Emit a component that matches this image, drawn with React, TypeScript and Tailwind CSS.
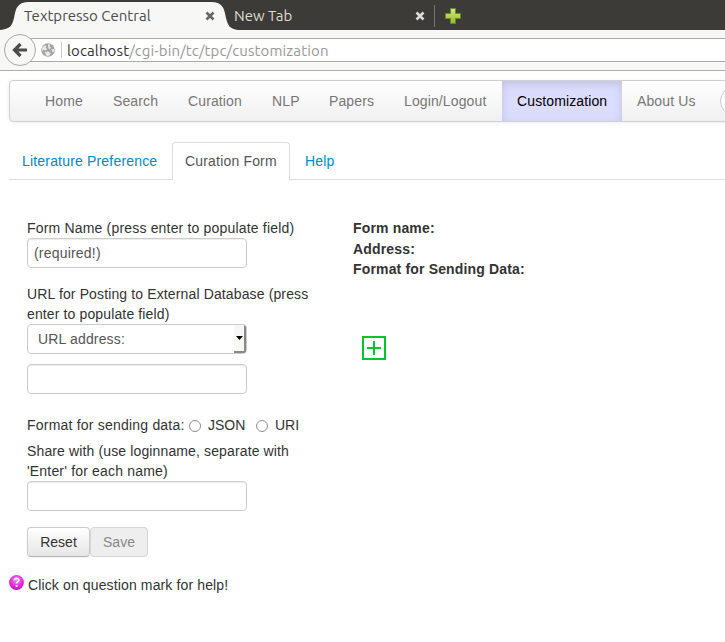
import React from "react";

const navItems = [
  { label: "Home", cls: "w-[68px]" },
  { label: "Search", cls: "w-[75px]" },
  { label: "Curation", cls: "w-[84px]" },
  { label: "NLP", cls: "w-[57px]" },
  { label: "Papers", cls: "w-[75px]" },
  { label: "Login/Logout", cls: "w-[113px]" },
  { label: "Customization", cls: "w-[120px]", active: true },
  { label: "About Us", cls: "w-[98px]" },
];

const field =
  "block h-[30px] w-[220px] rounded-[4px] border border-[#ccc] bg-white px-[6px] text-[14px] tracking-[0.2px] text-[#555] shadow-[inset_0_1px_1px_rgba(0,0,0,0.075)] outline-none";

function CloseMark({ color }: { color: string }) {
  return (
    <svg width="10" height="10" viewBox="0 0 10 10" className="-mr-px shrink-0">
      <path d="M1.5 1.5L8.5 8.5M8.5 1.5L1.5 8.5" stroke={color} strokeWidth="2.5" />
    </svg>
  );
}

function TabStrip() {
  return (
    <div className="relative flex h-[30px] bg-[#3c3b37] font-['Ubuntu','Noto_Sans','Open_Sans',sans-serif] text-[15px]">
      <svg width="240" height="30" className="absolute left-0 top-0">
        <path d="M0 30C10 29 12 26 14 18C16 7 18 2 29 2H211C222 2 224 7 226 18C228 26 230 29 238 30Z" fill="#f7f7f5" />
      </svg>
      <div className="relative flex h-[30px] w-[214px] items-center justify-between pl-6 pt-[2px] text-[#4c4c4c]">
        <span className="whitespace-nowrap">Textpresso Central</span>
        <CloseMark color="#666" />
      </div>
      <div className="relative flex h-[30px] w-[210px] items-center justify-between pl-5 pt-[2px] text-[#dfdbd2]">
        <span className="whitespace-nowrap">New Tab</span>
        <CloseMark color="#ddd" />
      </div>
      <div className="ml-[10px] mt-[5px] h-[22px] w-px bg-[#77756f]" />
      <svg width="18" height="18" viewBox="0 0 18 18" className="ml-[9px] mt-[7px]">
        <defs>
          <linearGradient id="plus" x1="0" y1="0" x2="0" y2="1">
            <stop offset="0" stopColor="#d7ea78" />
            <stop offset="1" stopColor="#98b92a" />
          </linearGradient>
        </defs>
        <path d="M6.5 1.5H11.5V6.5H16.5V11.5H11.5V16.5H6.5V11.5H1.5V6.5H6.5Z" fill="url(#plus)" stroke="#608c2b" />
      </svg>
    </div>
  );
}

function AddressBar() {
  return (
    <div className="flex h-[41px] border-b border-[#b3afaa] bg-[#f7f7f5] pl-1 pt-1">
      <div className="z-10 flex h-8 w-8 shrink-0 items-center justify-center rounded-full border border-[#aaa8a1] bg-[#f7f7f5]">
        <svg width="16" height="16" viewBox="0 0 16 16">
          <path d="M8.5 2L2.5 8L8.5 14M3 8H15" fill="none" stroke="#4c4c4c" strokeWidth="3.2" />
        </svg>
      </div>
      <div className="-ml-3 mt-1 flex h-6 flex-1 items-center border-y border-[#aeaba3] bg-white pl-[17px]">
        <svg width="14" height="14" viewBox="0 0 14 14" className="shrink-0">
          <circle cx="7" cy="7" r="6.8" fill="#a5a5a5" />
          <path d="M1.2 4.5L3.8 2.2L5.5 3.2L4.5 4.8L6.2 6L4.5 7.4L2.6 6.7L1 8.2ZM7.2 1L9.4 1.8L8.3 3.3L10 4.8L8.2 6.4L7 4.2ZM3.8 9.2L7 8.5L9.8 10L8.2 12.8L5.5 13ZM10.4 6.6L13 6V8.8L11.5 9.2Z" fill="#e8e8e6" />
        </svg>
        <span className="ml-[6px] h-4 w-px bg-[#ccc]" />
        <span className="ml-[5px] mt-[2px] whitespace-nowrap font-['Ubuntu','Noto_Sans','Open_Sans',sans-serif] text-[15px] leading-5 tracking-[0.13px] text-[#989898]">
          <span className="text-[#333]">localhost</span>/cgi-bin/tc/tpc/customization
        </span>
      </div>
    </div>
  );
}

export default function App() {
  return (
    <div className="h-[642px] w-[725px] overflow-hidden bg-white font-['Liberation_Sans',Arial,sans-serif] text-[14px] leading-5 text-[#333]">
      <TabStrip />
      <AddressBar />
      <nav className="ml-[9px] mt-[9px] flex h-[42px] w-[740px] rounded-[4px] border border-[#d0d0d0] bg-linear-to-b from-white to-[#f0f0f0] pl-5 tracking-[0.12px] shadow-[0_1px_4px_rgba(0,0,0,0.065)]">
        {navItems.map((item) => (
          <a
            key={item.label}
            className={`${item.cls} h-10 shrink-0 whitespace-nowrap pl-[15px] pt-[10px] ${
              item.active ? "bg-[#dcdcff] text-black shadow-[inset_0_3px_8px_rgba(0,0,0,0.125)]" : "text-[#777]"
            }`}
          >
            {item.label}
          </a>
        ))}
        <span className="mt-[5px] h-[30px] w-[60px] shrink-0 rounded-full border border-[#ccc] bg-white" />
      </nav>

      <div className="ml-[9px] mt-5 flex h-[38px] border-b border-[#ddd] tracking-[0.18px] text-[#0088cc]">
        <a className="h-[38px] w-[163px] whitespace-nowrap pl-[13px] pt-[9px]">Literature Preference</a>
        <a className="h-[38px] w-[118px] whitespace-nowrap rounded-t-[4px] border border-b-0 border-[#ddd] bg-white pl-3 pt-2 text-[#555]">
          Curation Form
        </a>
        <a className="pl-[15px] pt-[9px]">Help</a>
      </div>

      <main className="flex pl-[27px] pt-[38px]">
        <div className="w-[326px]">
          <label className="block whitespace-nowrap tracking-[0.18px]">Form Name (press enter to populate field)</label>
          <input className={field} defaultValue="(required!)" />
          <label className="mt-4 block whitespace-nowrap tracking-[0.13px]">
            URL for Posting to External Database (press
            <br />
            enter to populate field)
          </label>
          <div className="flex h-[30px] w-[220px] justify-between overflow-hidden rounded-[4px] border border-[#ccc] bg-white pl-[10px] leading-7 tracking-[0.16px] text-[#555]">
            <span>URL address:</span>
            <span className="flex h-[28px] w-[12px] items-center justify-end border-b-2 border-r-2 border-[#888] bg-[#f7f7f5] pr-px">
              <svg width="7" height="4" viewBox="0 0 7 4">
                <path d="M0 0H7L3.5 4Z" fill="#000" />
              </svg>
            </span>
          </div>
          <input className={`${field} mt-[10px]`} />
          <div className="mt-[21px] flex h-5 items-center whitespace-nowrap">
            <span className="w-[162px] tracking-[0.21px]">Format for sending data:</span>
            <span className="mt-[2px] h-3 w-3 rounded-full border border-[#8f8d88] bg-white" />
            <span className="ml-[7px] w-[48px]">JSON</span>
            <span className="mt-[2px] h-3 w-3 rounded-full border border-[#8f8d88] bg-white" />
            <span className="ml-[7px]">URI</span>
          </div>
          <label className="mt-[6px] block whitespace-nowrap tracking-[0.13px]">
            Share with (use loginname, separate with
            <br />
            <span className="tracking-[0.18px]">'Enter' for each name)</span>
          </label>
          <input className={field} />
          <div className="mt-4 flex">
            <button className="h-[30px] w-[63px] rounded-[4px] border border-[#ccc] border-b-[#b3b3b3] bg-linear-to-b from-white to-[#e6e6e6] text-[#333] shadow-[0_1px_2px_rgba(0,0,0,0.05)]">
              Reset
            </button>
            <button className="h-[30px] w-[58px] rounded-[4px] border border-[#d6d6d6] bg-[#eee] text-[#888]">Save</button>
          </div>
        </div>
        <div className="whitespace-nowrap font-bold tracking-[0.16px]">
          <div className="h-[21px]">Form name:</div>
          <div className="h-5">Address:</div>
          <div className="h-5">Format for Sending Data:</div>
          <svg width="24" height="24" viewBox="0 0 24 24" className="ml-[9px] mt-[57px]">
            <path d="M1 1H23V23H1ZM12 5V19M5 12H19" fill="none" stroke="#08c42b" strokeWidth="2" />
          </svg>
        </div>
      </main>

      <div className="mt-[18px] flex pl-[9px]">
        <svg width="15" height="15" viewBox="0 0 15 15">
          <defs>
            <radialGradient id="orb" cx="0.5" cy="0.35" r="0.65">
              <stop offset="0" stopColor="#f487ee" />
              <stop offset="0.65" stopColor="#e22bdc" />
              <stop offset="1" stopColor="#b512b4" />
            </radialGradient>
          </defs>
          <circle cx="7.5" cy="7.5" r="7.4" fill="url(#orb)" />
          <path d="M5.3 5.3C5.5 2.6 10 2.8 9.8 5.2C9.7 6.7 7.6 6.8 7.6 8.6M7.6 10V12" fill="none" stroke="#fff" strokeWidth="1.7" />
        </svg>
        <span className="ml-1 whitespace-nowrap tracking-[0.13px]">Click on question mark for help!</span>
      </div>
    </div>
  );
}
